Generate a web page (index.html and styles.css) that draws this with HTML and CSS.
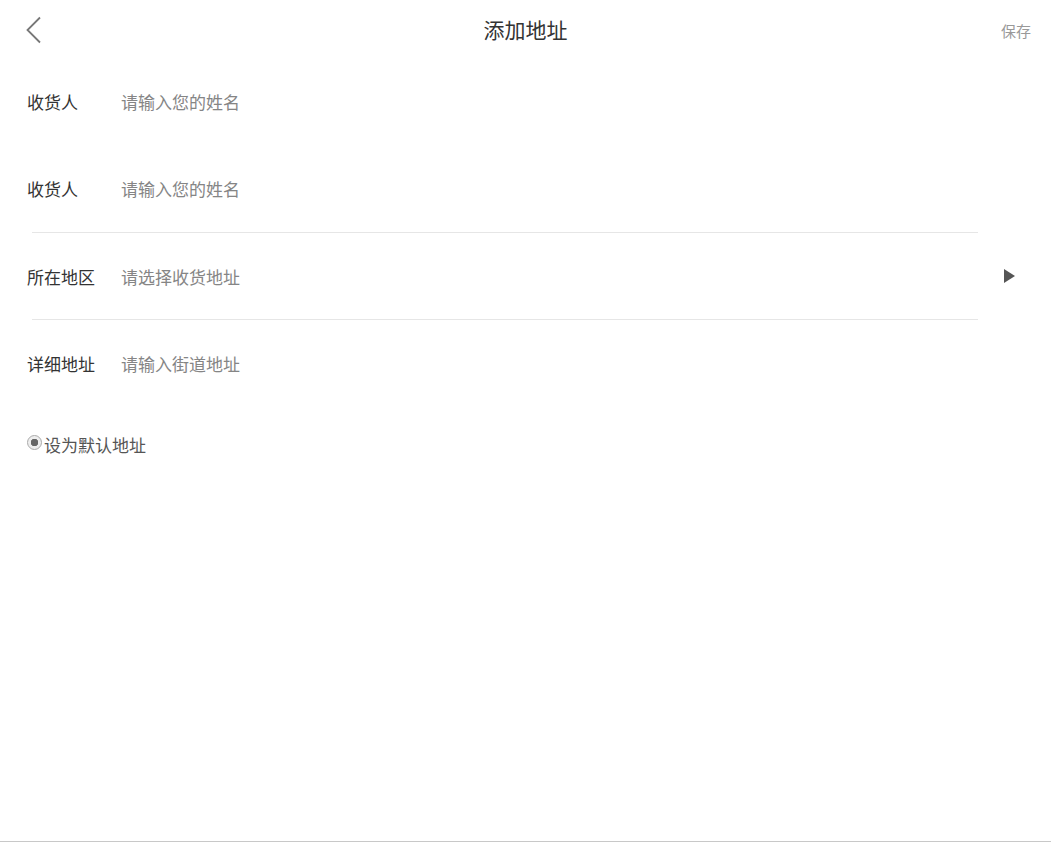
FILE: index.html
```html
<!doctype html>
<html lang="zh-CN">
  <head>
    <meta charset="UTF-8" />
    <meta name="viewport" content="width=device-width, initial-scale=1.0" />
    <title>添加地址</title>
    <link rel="stylesheet" href="styles.css">
  </head>
  <body>
    <div class="page">
      <header class="topbar">
        <a class="back" href="#">
          <svg width="16" height="28" viewBox="0 0 16 28">
            <polyline points="14,1.5 1.5,14 14,26.5" fill="none" stroke="#777" stroke-width="1.8" />
          </svg>
        </a>
        <h1>添加地址</h1>
        <a class="save" href="#">保存</a>
      </header>

      <form class="form">
        <div class="row">
          <span class="label">收货人</span>
          <input class="field" type="text" placeholder="请输入您的姓名">
        </div>
        <div class="row">
          <span class="label">收货人</span>
          <input class="field" type="text" placeholder="请输入您的姓名">
        </div>
        <div class="divider"></div>
        <div class="row short">
          <span class="label">所在地区</span>
          <input class="field" type="text" placeholder="请选择收货地址">
          <span class="arrow"></span>
        </div>
        <div class="divider"></div>
        <div class="row short">
          <span class="label">详细地址</span>
          <input class="field" type="text" placeholder="请输入街道地址">
        </div>

        <label class="default">
          <span class="radio"></span>设为默认地址
        </label>
      </form>
    </div>
  </body>
</html>
```

FILE: styles.css
```css
html, body {
  margin: 0;
  padding: 0;
}
body {
  font-family: "Noto Sans CJK SC", "Noto Sans", sans-serif;
  background: #fff;
  color: #333;
}
.page {
  min-height: 100vh;
  box-sizing: border-box;
  border-bottom: 1px solid #c8c8c8;
}
.topbar {
  height: 58px;
  display: flex;
  align-items: center;
  justify-content: space-between;
  padding: 0 20px 0 26px;
  position: relative;
}
.back {
  display: flex;
  margin-top: 2px;
}
.topbar h1 {
  position: absolute;
  left: 0;
  right: 0;
  text-align: center;
  margin: 0;
  font-size: 21px;
  font-weight: normal;
  color: #333;
  pointer-events: none;
}
.save {
  font-size: 15px;
  color: #999;
  text-decoration: none;
  margin-top: 2px;
}
.form {
  margin: 0;
}
.row {
  height: 87px;
  display: flex;
  align-items: center;
  padding: 0 36px 0 27px;
}
.row.short {
  height: 86px;
}
.label {
  width: 94px;
  font-size: 17px;
  color: #333;
}
.field {
  flex: 1;
  border: none;
  outline: none;
  padding: 0;
  font-family: inherit;
  font-size: 17px;
  color: #333;
  background: transparent;
}
.field::placeholder {
  color: #858585;
}
.arrow {
  width: 0;
  height: 0;
  border-top: 7px solid transparent;
  border-bottom: 7px solid transparent;
  border-left: 11px solid #555;
  margin-top: -1px;
}
.divider {
  height: 1px;
  background: #e6e6e6;
  margin: 0 73px 0 32px;
}
.default {
  display: flex;
  align-items: center;
  margin: 26px 0 0 27px;
  font-size: 17px;
  color: #555;
}
.radio {
  width: 13px;
  height: 13px;
  border-radius: 50%;
  border: 1px solid #aaa;
  background: radial-gradient(circle, #666 0, #666 3.5px, #eee 4px);
  margin-right: 2px;
  margin-top: -4px;
}
```
